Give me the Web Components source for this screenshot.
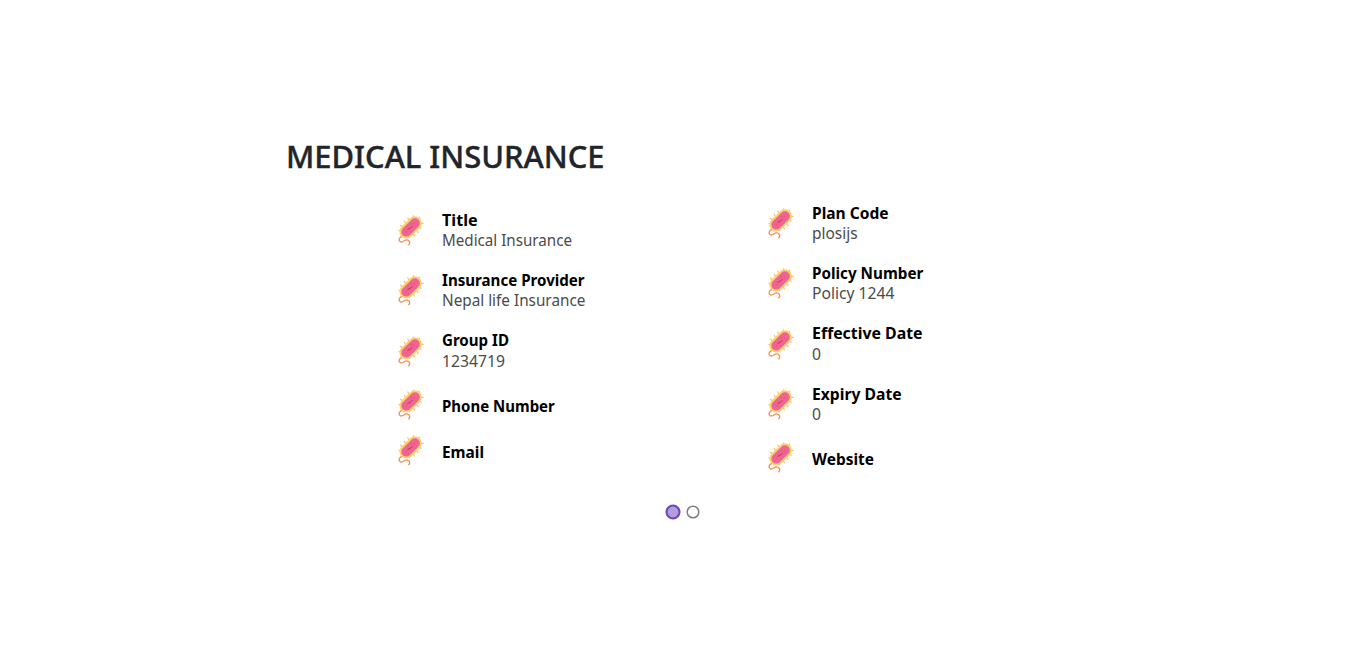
<!DOCTYPE html>
<html lang="en">
<head>
<meta charset="utf-8">
<title>Medical Insurance</title>
<style>
html, body { margin: 0; height: 100%; background: #fff; }
body { font-family: "Noto Sans", "Open Sans", sans-serif; overflow: hidden; }
</style>
</head>
<body>
<insurance-page></insurance-page>
<script>
// Text run condensed or widened to a set width, in pixels.
class FitText extends HTMLElement {
  connectedCallback() {
    const root = this.attachShadow({ mode: 'open' });
    root.innerHTML = `<style>
      :host { display: block; width: ${this.getAttribute('width')}px; white-space: nowrap; }
      span { display: inline-block; transform-origin: 0 50%; }
    </style><span></span>`;
    const s = root.querySelector('span');
    s.textContent = this.getAttribute('text');
    const w = s.getBoundingClientRect().width;
    if (w) s.style.transform = `scaleX(${Number(this.getAttribute('width')) / w})`;
  }
}

class BacteriaIcon extends HTMLElement {
  connectedCallback() {
    this.attachShadow({ mode: 'open' }).innerHTML = `<style>
      :host { display: block; width: 28px; height: 32px; }
      svg { display: block; }
    </style>
    <svg width="28" height="32" viewBox="0 0 28 32" fill="none">
      <g stroke="#fbc078" stroke-width="1.3" stroke-linecap="round">
        <path d="M8.6 9.5 7.3 7.2M12 6 10.8 4M16.5 4V1.8M21.3 5 22.6 3.3M24 9.3H26.2M22.8 13.5 24.3 14.3M20 17 21.2 18.6M16.5 20 17.3 22M12.5 22.5V23.8M5.2 12.3 3.4 11.4M3.5 16.6H2M5 21.2 4 22.2"/>
      </g>
      <path d="M9.3 17.7 17.9 9.2" stroke="#fdd16a" stroke-width="13.8" stroke-linecap="round"/>
      <path d="M9.3 17.7 17.9 9.2" stroke="#ee6591" stroke-width="9.8" stroke-linecap="round"/>
      <path d="M10.8 15.3 11.6 14.9 12.1 15.3 12.9 13.9 13.6 14.1 15.2 12.4" stroke="#c92f50" stroke-width=".9" stroke-linecap="round" stroke-linejoin="round"/>
      <path d="M14.3 9.8h.1M17.2 9.8h.1M9.2 17.8h.1" stroke="#d94773" stroke-width="1" stroke-linecap="round"/>
      <path d="M4.3 22.8C1.8 23.8 1.2 27 3.5 27.9 6.1 28.8 7.2 25.6 9.9 25.9 12.6 26.2 13.6 28.7 11.8 30.8" stroke="#f39155" stroke-width="1.4" stroke-linecap="round"/>
    </svg>`;
  }
}

class InfoItem extends HTMLElement {
  connectedCallback() {
    const [label, lw, value, vw] = ['label', 'lw', 'value', 'vw'].map(n => this.getAttribute(n));
    this.attachShadow({ mode: 'open' }).innerHTML = `<style>
      :host { display: flex; align-items: center; height: ${value ? 60.25 : 46}px; gap: var(--gap, 17px); }
      .copy { line-height: 20.3px; font-size: 15.7px; padding-top: ${value ? 0 : 4}px; }
      .label { font-weight: 700; color: #000; }
      .value { color: #4b4b4b; }
    </style>
    <bacteria-icon></bacteria-icon>
    <div class="copy">
      <fit-text class="label" text="${label}" width="${lw}"></fit-text>
      ${value ? `<fit-text class="value" text="${value}" width="${vw}"></fit-text>` : ''}
    </div>`;
  }
}

class PageDots extends HTMLElement {
  connectedCallback() {
    this.attachShadow({ mode: 'open' }).innerHTML = `<style>
      :host { display: flex; justify-content: center; align-items: center; gap: 5px; height: 16px; }
      svg { display: block; }
    </style>
    <svg width="16" height="16"><circle cx="8" cy="8" r="6.5" fill="#b39ddb" stroke="#6f48bb" stroke-width="2.1"/></svg>
    <svg width="14" height="14"><circle cx="7" cy="7" r="5.8" fill="#fff" stroke="#808080" stroke-width="1.5"/></svg>`;
  }
}

class InsurancePage extends HTMLElement {
  connectedCallback() {
    this.attachShadow({ mode: 'open' }).innerHTML = `<style>
      :host { display: block; box-sizing: border-box; width: 1366px; height: 668px; padding-top: 137px; }
      h1 { margin: 0 0 0 286px; font-size: 31.5px; line-height: 38px; height: 38px; font-weight: 500; color: #212529; -webkit-text-stroke: .4px #212529; }
      .columns { display: grid; grid-template-columns: 370px 370px; align-items: center; margin: 17.7px 0 0 397px; height: 287.2px; }
      .right { --gap: 16.8px; padding-top: .25px; }
      page-dots { width: 1365px; margin: 24.1px 0 0; }
    </style>
    <h1><fit-text text="MEDICAL INSURANCE" width="318.5"></fit-text></h1>
    <div class="columns">
      <div>
        <info-item label="Title" lw="35.6" value="Medical Insurance" vw="130"></info-item>
        <info-item label="Insurance Provider" lw="142.6" value="Nepal life Insurance" vw="143.4"></info-item>
        <info-item label="Group ID" lw="67" value="1234719" vw="63"></info-item>
        <info-item label="Phone Number" lw="112.8"></info-item>
        <info-item label="Email" lw="42"></info-item>
      </div>
      <div class="right">
        <info-item label="Plan Code" lw="76.6" value="plosijs" vw="45.6"></info-item>
        <info-item label="Policy Number" lw="111.3" value="Policy 1244" vw="82.4"></info-item>
        <info-item label="Effective Date" lw="110.6" value="0" vw="9"></info-item>
        <info-item label="Expiry Date" lw="89.6" value="0" vw="9"></info-item>
        <info-item label="Website" lw="62"></info-item>
      </div>
    </div>
    <page-dots></page-dots>`;
  }
}

customElements.define('fit-text', FitText);
customElements.define('bacteria-icon', BacteriaIcon);
customElements.define('info-item', InfoItem);
customElements.define('page-dots', PageDots);
customElements.define('insurance-page', InsurancePage);
</script>
</body>
</html>
